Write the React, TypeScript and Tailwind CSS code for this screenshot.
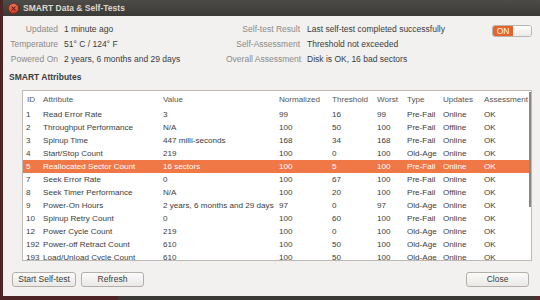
import { X } from "lucide-react";

type Attr = {
  id: string;
  name: string;
  value: string;
  norm: string;
  thresh: string;
  worst: string;
  type: string;
  updates: string;
  assess: string;
};

const attrs: Attr[] = [
  { id: "1", name: "Read Error Rate", value: "3", norm: "99", thresh: "16", worst: "99", type: "Pre-Fail", updates: "Online", assess: "OK" },
  { id: "2", name: "Throughput Performance", value: "N/A", norm: "100", thresh: "50", worst: "100", type: "Pre-Fail", updates: "Offline", assess: "OK" },
  { id: "3", name: "Spinup Time", value: "447 milli-seconds", norm: "168", thresh: "34", worst: "168", type: "Pre-Fail", updates: "Online", assess: "OK" },
  { id: "4", name: "Start/Stop Count", value: "219", norm: "100", thresh: "0", worst: "100", type: "Old-Age", updates: "Online", assess: "OK" },
  { id: "5", name: "Reallocated Sector Count", value: "16 sectors", norm: "100", thresh: "5", worst: "100", type: "Pre-Fail", updates: "Online", assess: "OK" },
  { id: "7", name: "Seek Error Rate", value: "0", norm: "100", thresh: "67", worst: "100", type: "Pre-Fail", updates: "Online", assess: "OK" },
  { id: "8", name: "Seek Timer Performance", value: "N/A", norm: "100", thresh: "20", worst: "100", type: "Pre-Fail", updates: "Offline", assess: "OK" },
  { id: "9", name: "Power-On Hours", value: "2 years, 6 months and 29 days", norm: "97", thresh: "0", worst: "97", type: "Old-Age", updates: "Online", assess: "OK" },
  { id: "10", name: "Spinup Retry Count", value: "0", norm: "100", thresh: "60", worst: "100", type: "Pre-Fail", updates: "Online", assess: "OK" },
  { id: "12", name: "Power Cycle Count", value: "219", norm: "100", thresh: "0", worst: "100", type: "Old-Age", updates: "Online", assess: "OK" },
  { id: "192", name: "Power-off Retract Count", value: "610", norm: "100", thresh: "50", worst: "100", type: "Old-Age", updates: "Online", assess: "OK" },
  { id: "193", name: "Load/Unload Cycle Count", value: "610", norm: "100", thresh: "50", worst: "100", type: "Old-Age", updates: "Online", assess: "OK" },
];

const cols = "grid grid-cols-[16px_120px_116px_53px_45px_30px_36px_41px_1fr]";

function InfoRow({ label, value }: { label: string; value: string }) {
  return (
    <>
      <div className="h-[15px] leading-[15px] text-right text-[#8c8a86] whitespace-nowrap">{label}</div>
      <div className="h-[15px] leading-[15px] text-[#3c3c3c] whitespace-nowrap">{value}</div>
    </>
  );
}

function GtkButton({ label, className }: { label: string; className: string }) {
  return (
    <button
      className={`h-[15px] leading-[13px] rounded-[3px] border border-[#b3b0aa] bg-gradient-to-b from-[#fbfbfa] to-[#e9e8e6] text-[#3c3c3c] text-center ${className}`}
    >
      {label}
    </button>
  );
}

export default function App() {
  return (
    <div
      className="w-[540px] h-[300px] flex flex-col bg-[#4e2426] text-[8.5px] overflow-hidden"
      style={{ fontFamily: '"Liberation Sans", Arial, sans-serif' }}
    >
      <div className="ml-[3px] w-[537px] h-[296px] flex flex-col">
        {/* title bar */}
        <div className="h-[16px] flex items-center bg-gradient-to-b from-[#4d4b47] to-[#3b3a36]">
          <div className="ml-[5px] w-[11px] h-[11px] rounded-full bg-gradient-to-b from-[#f2735a] to-[#d23c25] border border-[#8e2a1a] flex items-center justify-center">
            <X className="w-[7px] h-[7px] text-[#5a1a10]" strokeWidth={3.5} />
          </div>
          <span className="ml-[4px] font-bold text-[#dcd8cf] leading-[16px]">SMART Data &amp; Self-Tests</span>
        </div>

        {/* body */}
        <div className="flex-1 flex flex-col bg-[#f2f1f0]">
          <div className="flex pt-[6px]">
            <div className="grid grid-cols-[55px_162px] gap-x-[6px]">
              <InfoRow label="Updated" value="1 minute ago" />
              <InfoRow label="Temperature" value="51° C / 124° F" />
              <InfoRow label="Powered On" value="2 years, 6 months and 29 days" />
            </div>
            <div className="grid grid-cols-[74px_1fr] gap-x-[7px] w-[266px] content-start">
              <InfoRow label="Self-test Result" value="Last self-test completed successfully" />
              <InfoRow label="Self-Assessment" value="Threshold not exceeded" />
              <InfoRow label="Overall Assessment" value="Disk is OK, 16 bad sectors" />
            </div>
            <div className="mt-[3px] w-[40px] h-[12px] flex rounded-[3px] border border-[#b8b5b0] overflow-hidden">
              <div className="w-[20px] bg-[#e8622c] text-white leading-[10px] text-center">ON</div>
              <div className="flex-1 bg-gradient-to-b from-[#ffffff] to-[#ebeae8]" />
            </div>
          </div>

          <div className="mt-[3px] h-[14px] leading-[14px] pl-[6px] font-bold text-[#3c3c3c]">SMART Attributes</div>

          <div className="relative mt-[6px] ml-[19px] w-[510px] h-[171px] border border-[#bdbab5] bg-white overflow-hidden text-[#3c3c3c] text-[8.1px]">
            <div className={`${cols} h-[17px] leading-[17px] text-[#555555]`}>
              {["ID", "Attribute", "Value", "Normalized", "Threshold", "Worst", "Type", "Updates", "Assessment"].map(h => (
                <div key={h} className="pl-[4px] whitespace-nowrap">{h}</div>
              ))}
            </div>
            {attrs.map(a => {
              const sel = a.id === "5";
              return (
                <div
                  key={a.id}
                  className={`${cols} h-[13px] leading-[13px] ${sel ? "bg-[#f07746] text-white" : ""}`}
                >
                  <div className="pl-[3px] whitespace-nowrap">{a.id}</div>
                  <div className="pl-[4px] whitespace-nowrap">{a.name}</div>
                  <div className="pl-[4px] whitespace-nowrap">{a.value}</div>
                  <div className="pl-[4px] whitespace-nowrap">{a.norm}</div>
                  <div className="pl-[4px] whitespace-nowrap">{a.thresh}</div>
                  <div className="pl-[4px] whitespace-nowrap">{a.worst}</div>
                  <div className="pl-[4px] whitespace-nowrap">{a.type}</div>
                  <div className="pl-[4px] whitespace-nowrap">{a.updates}</div>
                  <div className="pl-[4px] whitespace-nowrap">{a.assess}</div>
                </div>
              );
            })}
            {/* overlay scrollbar indicator */}
            <div className="absolute right-[0px] top-[1px] w-[2px] h-[115px] bg-[#8a8884]" />
          </div>

          <div className="mt-[11px] flex pl-[9px] pr-[11px]">
            <GtkButton label="Start Self-test" className="w-[64px]" />
            <GtkButton label="Refresh" className="ml-[5px] w-[63px]" />
            <GtkButton label="Close" className="ml-auto w-[63px]" />
          </div>
        </div>
      </div>
      <div className="flex h-[4px]">
        <div className="w-[118px] bg-[#4e2426]" />
        <div className="flex-1 bg-[#3a3936]" />
        <div className="w-[4px] bg-[#5a2a2c]" />
      </div>
    </div>
  );
}
